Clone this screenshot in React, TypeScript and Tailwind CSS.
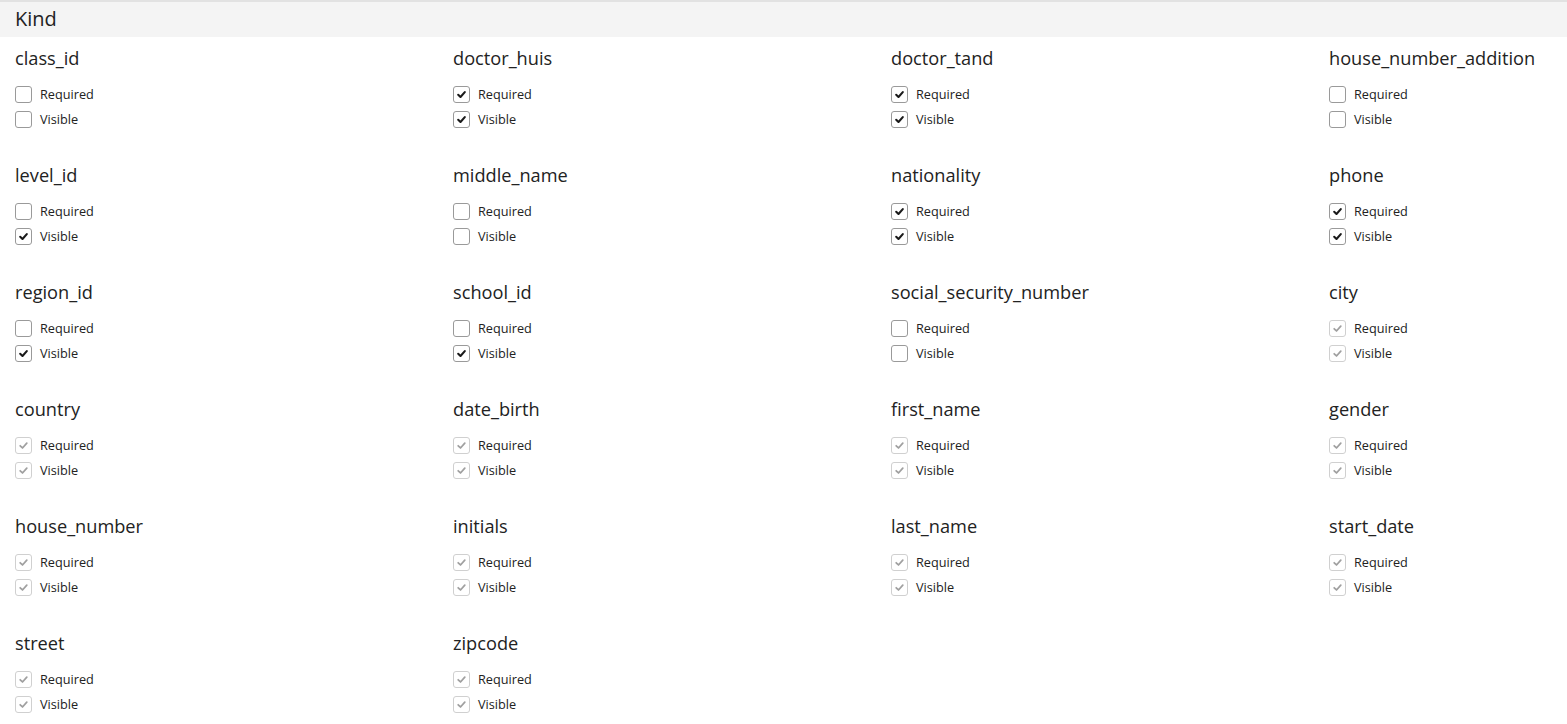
type State = "off" | "on" | "locked";

type Field = { name: string; required: State; visible: State };

const fields: Field[] = [
  { name: "class_id", required: "off", visible: "off" },
  { name: "doctor_huis", required: "on", visible: "on" },
  { name: "doctor_tand", required: "on", visible: "on" },
  { name: "house_number_addition", required: "off", visible: "off" },
  { name: "level_id", required: "off", visible: "on" },
  { name: "middle_name", required: "off", visible: "off" },
  { name: "nationality", required: "on", visible: "on" },
  { name: "phone", required: "on", visible: "on" },
  { name: "region_id", required: "off", visible: "on" },
  { name: "school_id", required: "off", visible: "on" },
  { name: "social_security_number", required: "off", visible: "off" },
  { name: "city", required: "locked", visible: "locked" },
  { name: "country", required: "locked", visible: "locked" },
  { name: "date_birth", required: "locked", visible: "locked" },
  { name: "first_name", required: "locked", visible: "locked" },
  { name: "gender", required: "locked", visible: "locked" },
  { name: "house_number", required: "locked", visible: "locked" },
  { name: "initials", required: "locked", visible: "locked" },
  { name: "last_name", required: "locked", visible: "locked" },
  { name: "start_date", required: "locked", visible: "locked" },
  { name: "street", required: "locked", visible: "locked" },
  { name: "zipcode", required: "locked", visible: "locked" },
];

function Check({ state, label }: { state: State; label: string }) {
  return (
    <label className="flex h-[25px] items-center gap-[8px] text-[12.7px] text-[#222]">
      <span
        className={
          state === "locked"
            ? "flex h-[17px] w-[17px] items-center justify-center rounded-[3px] border border-[#d0d0d0] bg-white"
            : "flex h-[17px] w-[17px] items-center justify-center rounded-[3px] border border-[#9a9a9a] bg-white"
        }
      >
        {state !== "off" && (
          <svg viewBox="0 0 12 12" className="h-[11px] w-[11px]">
            <path
              d="M2.4 6.3 L4.9 8.7 L9.6 3.4"
              fill="none"
              stroke={state === "on" ? "#1a1a1a" : "#a0a0a0"}
              strokeWidth={state === "on" ? 2.3 : 1.9}
              strokeLinecap="round"
              strokeLinejoin="round"
            />
          </svg>
        )}
      </span>
      <span>{label}</span>
    </label>
  );
}

export default function App() {
  return (
    <div className="min-h-screen overflow-hidden bg-white font-['Open_Sans',sans-serif]">
      <div className="h-[37px] border-t-2 border-[#e2e2e2] bg-[#f4f4f4] px-[15px] text-[20px] leading-[34px] text-[#222]">
        Kind
      </div>
      <div className="grid grid-cols-[repeat(4,438px)] px-[15px] pt-[9px]">
        {fields.map((f) => (
          <div key={f.name} className="h-[117px]">
            <div className="h-[24px] text-[18.2px] leading-[24px] text-[#222]">
              {f.name}
            </div>
            <div className="mt-[12px]">
              <Check state={f.required} label="Required" />
              <Check state={f.visible} label="Visible" />
            </div>
          </div>
        ))}
      </div>
    </div>
  );
}
